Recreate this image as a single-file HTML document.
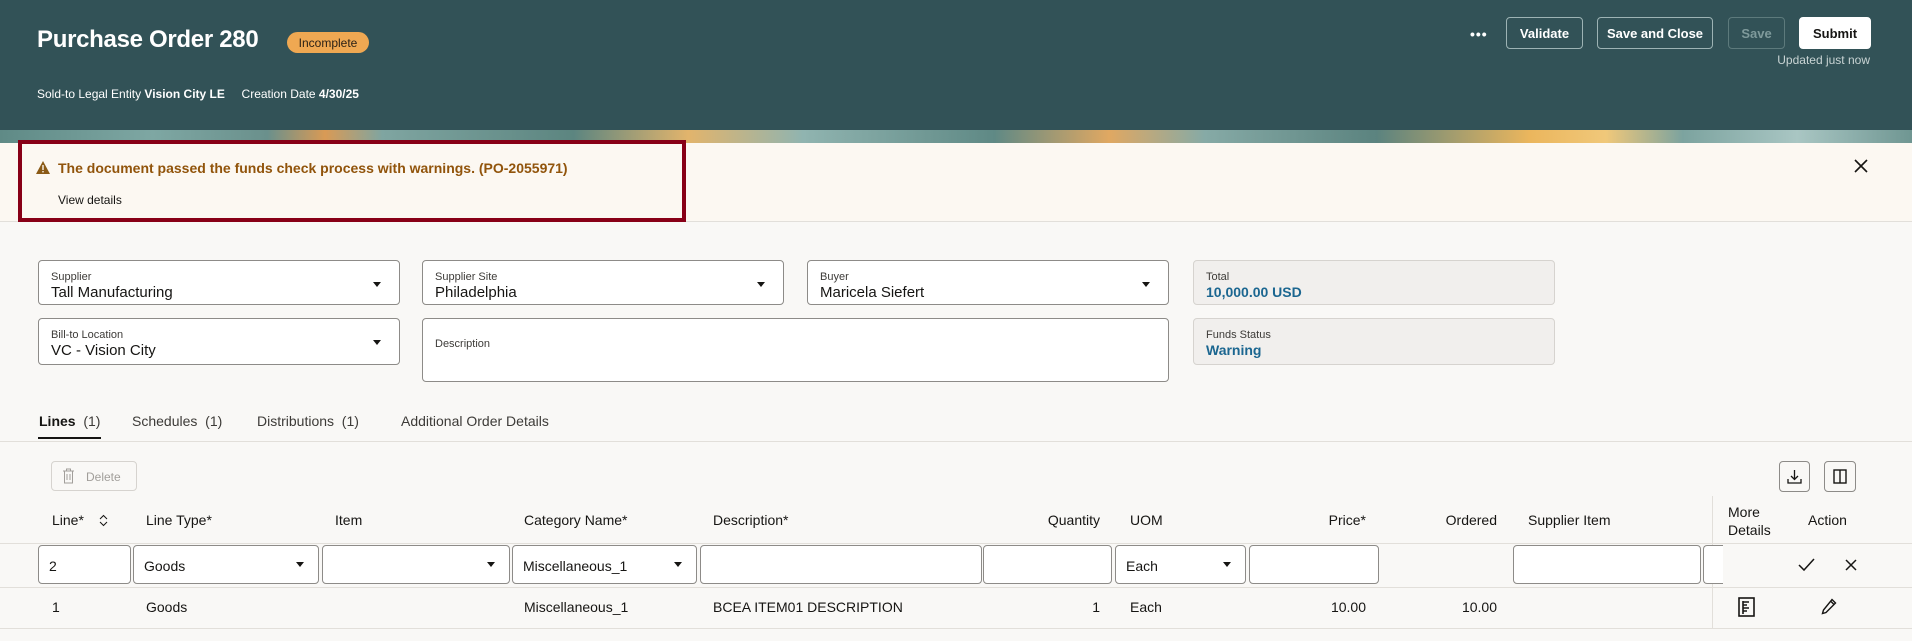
<!DOCTYPE html><html><head><style>
*{box-sizing:border-box;margin:0;padding:0}
body{width:1912px;height:641px;overflow:hidden;background:#f9f8f6;font-family:"Liberation Sans",sans-serif;color:#161513;position:relative}
.a{position:absolute}
.hdr{left:0;top:0;width:1912px;height:132px;background:#325257}
.strip{left:0;top:130px;width:1912px;height:13px;background:linear-gradient(90deg,#5f8a86 0,#7ea7a3 8%,#6a908c 14%,#d99a55 17%,#7fa5a1 20%,#5c8580 30%,#e2b46c 36%,#90b4b0 42%,#5f8985 52%,#e0a862 58%,#86aaa6 63%,#5b837f 72%,#ebb65d 80%,#f0c87a 84%,#7ca39f 88%,#a9c6c3 94%,#6f9692 100%)}
.btn{height:32px;border:1px solid #9db3b4;border-radius:4px;color:#fff;font-size:13px;font-weight:bold;display:flex;align-items:center;justify-content:center}
.band{left:0;top:143px;width:1912px;height:79px;background:#fcf8f2;border-bottom:1px solid #e2dfda}
.fld{border:1px solid #8d8b88;border-radius:4px;background:#fff}
.fld .l{position:absolute;left:12px;top:10px;font-size:11px;color:#3d3b38}
.fld .v{position:absolute;left:12px;top:23px;font-size:15px}
.ro{background:#f1efed;border-color:#d6d3cf}
.ro .v{color:#1b6690;font-weight:bold;font-size:14px}
.car{position:absolute;right:18px;top:21px;width:0;height:0;border-left:4.5px solid transparent;border-right:4.5px solid transparent;border-top:5px solid #161513}
.tab{top:413px;font-size:14px;color:#3d3b38}
.th{top:512px;font-size:14px;color:#161513}
.in{top:545px;height:39px;border:1px solid #8d8b88;border-radius:4px;background:#fff;font-size:14px;padding:12px 0 0 10px}
.in .car{top:16px;right:14px}
.td{top:599px;font-size:14px}
.hl{height:1px;background:#e2dfda}
</style></head><body>
<div class="a hdr"></div><div class="a strip"></div>
<div class="a" style="left:37px;top:26px;color:#fff;font-size:24px;font-weight:bold;letter-spacing:-0.3px">Purchase Order 280</div>
<div class="a" style="left:287px;top:32px;width:82px;height:21px;background:#efa852;border-radius:11px;font-size:12px;color:#2b2116;display:flex;align-items:center;justify-content:center">Incomplete</div>
<div class="a" style="left:37px;top:87px;color:#fff;font-size:12px">Sold-to Legal Entity <b>Vision City LE</b>&nbsp;&nbsp;&nbsp;&nbsp; Creation Date <b>4/30/25</b></div>
<div class="a" style="left:1470px;top:26px;color:#fff;font-size:14px;font-weight:bold;letter-spacing:1px">•••</div>
<div class="a btn" style="left:1506px;top:17px;width:77px">Validate</div>
<div class="a btn" style="left:1597px;top:17px;width:116px">Save and Close</div>
<div class="a btn" style="left:1728px;top:17px;width:57px;border-color:#5d7a7c;color:#7f9a9b">Save</div>
<div class="a btn" style="left:1799px;top:17px;width:72px;background:#fff;border-color:#fff;color:#161513">Submit</div>
<div class="a" style="right:42px;top:53px;color:#c9d4d4;font-size:12px">Updated just now</div>
<div class="a band"></div>
<div class="a" style="left:18px;top:140px;width:668px;height:82px;border:4px solid #880017"></div>
<svg class="a" style="left:36px;top:161px" width="14" height="13" viewBox="0 0 14 13"><path d="M7 0L14 13H0Z" fill="#8a5a16"/><rect x="6.3" y="4" width="1.4" height="5" fill="#fcf8f2"/><rect x="6.3" y="10" width="1.4" height="1.4" fill="#fcf8f2"/></svg>
<div class="a" style="left:58px;top:160px;font-size:14px;font-weight:bold;color:#91540b">The document passed the funds check process with warnings. (PO-2055971)</div>
<div class="a" style="left:58px;top:193px;font-size:12px">View details</div>
<svg class="a" style="left:1854px;top:159px" width="14" height="14" viewBox="0 0 14 14"><path d="M1 1L13 13M13 1L1 13" stroke="#161513" stroke-width="1.6"/></svg>
<div class="a fld" style="left:38px;top:260px;width:362px;height:45px"><span class="l">Supplier</span><span class="v">Tall Manufacturing</span><i class="car"></i></div>
<div class="a fld" style="left:422px;top:260px;width:362px;height:45px"><span class="l">Supplier Site</span><span class="v">Philadelphia</span><i class="car"></i></div>
<div class="a fld" style="left:807px;top:260px;width:362px;height:45px"><span class="l">Buyer</span><span class="v">Maricela Siefert</span><i class="car"></i></div>
<div class="a fld ro" style="left:1193px;top:260px;width:362px;height:45px"><span class="l">Total</span><span class="v">10,000.00 USD</span></div>
<div class="a fld" style="left:38px;top:318px;width:362px;height:47px"><span class="l">Bill-to Location</span><span class="v">VC - Vision City</span><i class="car"></i></div>
<div class="a fld" style="left:422px;top:318px;width:747px;height:64px"><span class="l" style="top:19px">Description</span></div>
<div class="a fld ro" style="left:1193px;top:318px;width:362px;height:47px"><span class="l">Funds Status</span><span class="v">Warning</span></div>
<div class="a tab" style="left:39px"><b style="color:#161513">Lines</b>&nbsp; (1)</div>
<div class="a tab" style="left:132px">Schedules&nbsp; (1)</div>
<div class="a tab" style="left:257px">Distributions&nbsp; (1)</div>
<div class="a tab" style="left:401px">Additional Order Details</div>
<div class="a" style="left:38px;top:437px;width:63px;height:2px;background:#161513"></div>
<div class="a hl" style="left:0;top:441px;width:1912px"></div>
<div class="a" style="left:51px;top:461px;width:86px;height:30px;border:1px solid #d6d3cf;border-radius:4px;font-size:12px;color:#a19e9a;padding:8px 0 0 34px">Delete</div>
<svg class="a" style="left:62px;top:468px" width="13" height="16" viewBox="0 0 13 16" fill="none" stroke="#a19e9a"><path d="M1 3H12M4.5 3V1H8.5V3M2.5 3V15H10.5V3M5 6V12M8 6V12"/></svg>
<div class="a" style="left:1779px;top:461px;width:31px;height:31px;border:1px solid #8d8b88;border-radius:4px"></div>
<svg class="a" style="left:1787px;top:469px" width="15" height="15" viewBox="0 0 15 15" fill="none" stroke="#161513" stroke-width="1.3"><path d="M7.5 1V10M4 7L7.5 10.5L11 7M1 10V14H14V10"/></svg>
<div class="a" style="left:1824px;top:461px;width:32px;height:31px;border:1px solid #8d8b88;border-radius:4px"></div>
<svg class="a" style="left:1833px;top:469px" width="14" height="15" viewBox="0 0 14 15" fill="none" stroke="#161513" stroke-width="1.4"><rect x="1" y="1" width="12" height="13"/><path d="M7 1V14"/></svg>
<div class="a hl" style="left:1712px;top:496px;width:1px;height:132px"></div>
<div class="a th" style="left:52px">Line*</div>
<svg class="a" style="left:99px;top:514px" width="9" height="13" viewBox="0 0 9 13" fill="none" stroke="#161513"><path d="M1 5L4.5 1.5L8 5M1 8L4.5 11.5L8 8"/></svg>
<div class="a th" style="left:146px">Line Type*</div>
<div class="a th" style="left:335px">Item</div>
<div class="a th" style="left:524px">Category Name*</div>
<div class="a th" style="left:713px">Description*</div>
<div class="a th" style="left:1000px;width:100px;text-align:right">Quantity</div>
<div class="a th" style="left:1130px">UOM</div>
<div class="a th" style="left:1266px;width:100px;text-align:right">Price*</div>
<div class="a th" style="left:1397px;width:100px;text-align:right">Ordered</div>
<div class="a th" style="left:1528px">Supplier Item</div>
<div class="a" style="left:1728px;top:503px;font-size:14px;line-height:18px">More<br>Details</div>
<div class="a th" style="left:1808px">Action</div>
<div class="a hl" style="left:0;top:543px;width:1912px"></div>
<div class="a in" style="left:38px;width:93px">2</div>
<div class="a in" style="left:133px;width:186px">Goods<i class="car"></i></div>
<div class="a in" style="left:322px;width:188px"><i class="car"></i></div>
<div class="a in" style="left:512px;width:185px">Miscellaneous_1<i class="car"></i></div>
<div class="a in" style="left:700px;width:282px"></div>
<div class="a in" style="left:983px;width:129px"></div>
<div class="a in" style="left:1115px;width:131px">Each<i class="car"></i></div>
<div class="a in" style="left:1249px;width:130px"></div>
<div class="a in" style="left:1513px;width:188px"></div>
<div class="a in" style="left:1703px;width:20px;border-right:none;border-radius:4px 0 0 4px"></div>
<svg class="a" style="left:1798px;top:558px" width="17" height="14" viewBox="0 0 17 14" fill="none" stroke="#161513" stroke-width="1.5"><path d="M1 7L6 12L16 1"/></svg>
<svg class="a" style="left:1845px;top:559px" width="12" height="12" viewBox="0 0 12 12" stroke="#161513" stroke-width="1.5"><path d="M1 1L11 11M11 1L1 11"/></svg>
<div class="a hl" style="left:0;top:587px;width:1912px"></div>
<div class="a td" style="left:52px">1</div>
<div class="a td" style="left:146px">Goods</div>
<div class="a td" style="left:524px">Miscellaneous_1</div>
<div class="a td" style="left:713px">BCEA ITEM01 DESCRIPTION</div>
<div class="a td" style="left:1000px;width:100px;text-align:right">1</div>
<div class="a td" style="left:1130px">Each</div>
<div class="a td" style="left:1266px;width:100px;text-align:right">10.00</div>
<div class="a td" style="left:1397px;width:100px;text-align:right">10.00</div>
<svg class="a" style="left:1738px;top:597px" width="17" height="20" viewBox="0 0 17 20" fill="none" stroke="#161513" stroke-width="1.6"><rect x="1" y="1" width="15" height="18"/><path d="M5 5H11M5 8H9M5 11H11M5 14H9M5 4V17"/></svg>
<svg class="a" style="left:1821px;top:598px" width="16" height="17" viewBox="0 0 16 17" fill="none" stroke="#161513" stroke-width="1.4"><path d="M11 1.5L14.5 5L5 14.5L1.5 15.5L2.5 12Z M9.5 3L13 6.5"/></svg>
<div class="a hl" style="left:0;top:628px;width:1912px"></div>
</body></html>
